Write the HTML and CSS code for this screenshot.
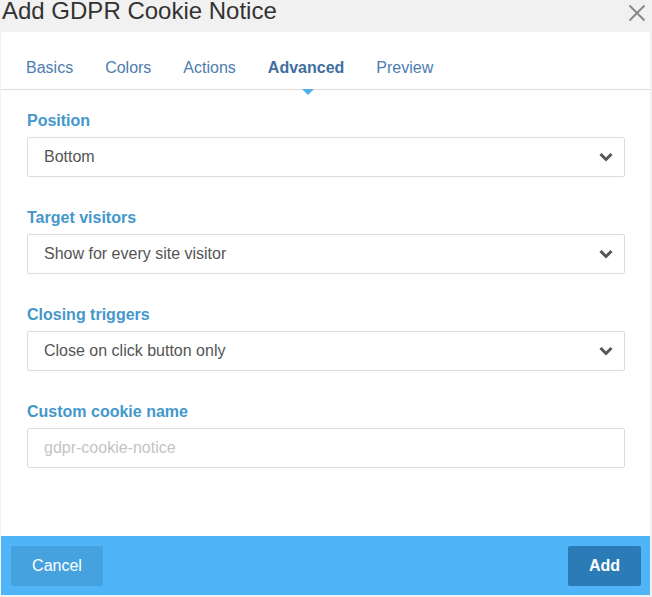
FILE: index.html
```html
<!DOCTYPE html>
<html>
<head>
<meta charset="utf-8">
<link rel="stylesheet" href="styles.css">
</head>
<body>
<div class="dialog">
  <div class="titlebar">
    <h1 class="title">Add GDPR Cookie Notice</h1>
    <button class="close" aria-label="Close">
      <svg width="18" height="18" viewBox="0 0 18 18"><path d="M1.5 1.5 L16.5 16.5 M16.5 1.5 L1.5 16.5" stroke="#8a8a8a" stroke-width="2" fill="none"/></svg>
    </button>
  </div>
  <div class="panel">
    <nav class="tabs">
      <span class="tab">Basics</span>
      <span class="tab">Colors</span>
      <span class="tab">Actions</span>
      <span class="tab active">Advanced</span>
      <span class="tab">Preview</span>
    </nav>
    <div class="body">
      <div class="field">
        <div class="label">Position</div>
        <div class="select"><span>Bottom</span><svg class="chev" width="14" height="10" viewBox="0 0 14 10"><path d="M1.5 2 L7 7.5 L12.5 2" stroke="#555" stroke-width="3" fill="none"/></svg></div>
      </div>
      <div class="field">
        <div class="label">Target visitors</div>
        <div class="select"><span>Show for every site visitor</span><svg class="chev" width="14" height="10" viewBox="0 0 14 10"><path d="M1.5 2 L7 7.5 L12.5 2" stroke="#555" stroke-width="3" fill="none"/></svg></div>
      </div>
      <div class="field">
        <div class="label">Closing triggers</div>
        <div class="select"><span>Close on click button only</span><svg class="chev" width="14" height="10" viewBox="0 0 14 10"><path d="M1.5 2 L7 7.5 L12.5 2" stroke="#555" stroke-width="3" fill="none"/></svg></div>
      </div>
      <div class="field">
        <div class="label">Custom cookie name</div>
        <div class="input placeholder">gdpr-cookie-notice</div>
      </div>
    </div>
    <div class="footer">
      <button class="btn cancel">Cancel</button>
      <button class="btn add">Add</button>
    </div>
  </div>
</div>
</body>
</html>
```

FILE: styles.css
```css
* { box-sizing: border-box; }
html, body { margin: 0; padding: 0; }
body {
  background: #f1f1f1;
  font-family: "Liberation Sans", Arial, sans-serif;
  width: 652px;
  height: 597px;
  overflow: hidden;
}
.dialog { display: flex; flex-direction: column; height: 597px; }
.titlebar {
  height: 32px;
  display: flex;
  justify-content: space-between;
  align-items: flex-start;
  padding: 0 6px 0 2px;
}
.title {
  margin: 0;
  font-weight: normal;
  font-size: 24px;
  line-height: 21px;
  color: #333;
}
.close {
  border: 0;
  background: none;
  padding: 0;
  margin-top: 4px;
  width: 18px;
  height: 18px;
  display: block;
}
.close svg { display: block; }
.panel {
  margin: 0 2px 2px 1px;
  background: #fff;
  border-radius: 3px 3px 0 0;
  flex: 1;
  display: flex;
  flex-direction: column;
}
.tabs {
  height: 58px;
  border-bottom: 1px solid #dcdcdc;
  display: flex;
  align-items: flex-end;
  padding: 0 0 12px 25px;
}
.tab {
  font-size: 16px;
  color: #4d7caf;
  line-height: 18px;
  position: relative;
  margin-right: 32px;
}
.tab.active { font-weight: bold; color: #3f6e9f; }
.tab.active::after {
  content: "";
  position: absolute;
  left: 34px;
  top: 30px;
  border-left: 6px solid transparent;
  border-right: 6px solid transparent;
  border-top: 6px solid #4cb1ee;
}
.body {
  flex: 1;
  padding: 22px 25px 0 26px;
  display: flex;
  flex-direction: column;
  gap: 32px;
}
.field { display: flex; flex-direction: column; }
.label {
  font-size: 16px;
  font-weight: bold;
  color: #4497cb;
  line-height: 18px;
  margin-bottom: 7px;
}
.select, .input {
  height: 40px;
  border: 1px solid #dcdcdc;
  border-radius: 2px;
  display: flex;
  align-items: center;
  justify-content: space-between;
  padding: 0 11px 0 16px;
  font-size: 16px;
  color: #555;
}
.chev { display: block; }
.placeholder { color: #c4c4c4; }
.footer {
  height: 59px;
  background: #50b5f8;
  display: flex;
  justify-content: space-between;
  align-items: center;
  padding: 0 9px 0 10px;
}
.btn {
  height: 40px;
  border: 0;
  border-radius: 2px;
  font-family: "Liberation Sans", Arial, sans-serif;
  font-size: 16px;
  color: #fff;
}
.cancel { width: 92px; background: #46a2df; }
.add { width: 73px; background: #2a7bb6; font-weight: bold; }
```
